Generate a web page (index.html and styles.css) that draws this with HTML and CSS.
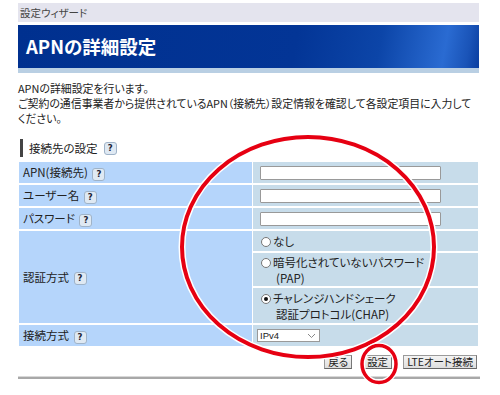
FILE: index.html
```html
<!DOCTYPE html>
<html lang="ja">
<head>
<meta charset="utf-8">
<title>APNの詳細設定</title>
<link rel="stylesheet" href="styles.css">
</head>
<body>
<div class="page">
  <div class="wizard-bar">設定ウィザード</div>
  <h1 class="title">APNの詳細設定</h1>
  <p class="desc">APNの詳細設定を行います。<br>ご契約の通信事業者から提供されているAPN（接続先）設定情報を確認して各設定項目に入力して<br>ください。</p>
  <h2 class="section">接続先の設定 <span class="help">?</span></h2>
  <table class="form">
    <tr>
      <th>APN(接続先) <span class="help">?</span></th>
      <td><span class="input"></span></td>
    </tr>
    <tr>
      <th>ユーザー名 <span class="help">?</span></th>
      <td><span class="input"></span></td>
    </tr>
    <tr>
      <th>パスワード <span class="help">?</span></th>
      <td><span class="input"></span></td>
    </tr>
    <tr>
      <th>認証方式 <span class="help">?</span></th>
      <td class="auth">
        <div class="opt opt-none"><span class="radio"></span>なし</div>
        <div class="opt opt-pap"><span class="radio"></span>暗号化されていないパスワード<br><span class="sub">(PAP)</span></div>
        <div class="opt opt-chap"><span class="radio checked"></span>チャレンジハンドシェーク<br><span class="sub">認証プロトコル(CHAP)</span></div>
      </td>
    </tr>
    <tr>
      <th>接続方式 <span class="help">?</span></th>
      <td><span class="select">IPv4<svg class="chev" width="9" height="6" viewBox="0 0 9 6"><path d="M1 1 L4.5 4.5 L8 1" fill="none" stroke="#888" stroke-width="1"/></svg></span></td>
    </tr>
  </table>
  <div class="buttons">
    <span class="btn">戻る</span>
    <span class="btn">設定</span>
    <span class="btn">LTEオート接続</span>
  </div>
  <div class="rule"></div>
</div>
<svg class="marks" width="500" height="395" viewBox="0 0 500 395">
  <ellipse cx="308" cy="247" rx="126" ry="110" fill="none" stroke="#fff" stroke-width="7"/>
  <ellipse cx="308" cy="247" rx="126" ry="110" fill="none" stroke="#e60012" stroke-width="4"/>
  <ellipse cx="379" cy="364" rx="17" ry="18.5" fill="none" stroke="#fff" stroke-width="6"/>
  <ellipse cx="379" cy="364" rx="17" ry="18.5" fill="none" stroke="#e60012" stroke-width="3.5"/>
</svg>
</body>
</html>
```

FILE: styles.css
```css
html, body {
  margin: 0;
  padding: 0;
  background: #fff;
}
body {
  font-family: "Noto Sans CJK JP", "Noto Sans", sans-serif;
  font-size: 11.5px;
  color: #222;
  font-feature-settings: "palt";
  position: relative;
  width: 500px;
  height: 395px;
  overflow: hidden;
}
.page {
  width: 461px;
  margin-left: 18px;
  padding-top: 3px;
}
.wizard-bar {
  height: 19px;
  line-height: 19px;
  background: #e4e4ee;
  font-size: 10.5px;
  color: #444;
  padding-left: 2px;
}
.title {
  margin: 3px 0 0;
  height: 43px;
  line-height: 42px;
  padding-left: 8px;
  font-size: 18.5px;
  font-weight: bold;
  color: #fff;
  background: linear-gradient(100deg, #00308f 0%, #033596 60%, #0c45a8 78%, #2a6bd2 92%, #1a54b8 97%, #0a3ea0 100%);
  border-bottom: 5px solid #b9cfe3;
}
.desc {
  margin: 8px 0 0;
  line-height: 15px;
  font-size: 10.9px;
  white-space: nowrap;
}
.section {
  margin: 13px 0 0 2px;
  height: 18px;
  line-height: 18px;
  font-size: 11.5px;
  font-weight: normal;
  border-left: 3px solid #444;
  padding-left: 6px;
  display: flex;
  align-items: center;
  gap: 4px;
}
.help {
  display: inline-block;
  width: 11px;
  height: 11px;
  line-height: 11px;
  text-align: center;
  font-family: "DejaVu Sans", sans-serif;
  font-size: 8.5px;
  font-weight: bold;
  color: #223;
  background: #dfe9f3;
  border: 1px solid #9fb3c8;
  border-radius: 3px;
  vertical-align: middle;
  margin-left: 2px;
}
.form {
  margin: 5px 0 0 1px;
  width: 459px;
  border-collapse: collapse;
}
.form th, .form td {
  border-bottom: 2px solid #fff;
  padding: 0;
  height: 21px;
}
.form tr:last-child th, .form tr:last-child td {
  border-bottom: none;
}
.form th {
  width: 229px;
  background: #b5d5fb;
  text-align: left;
  font-weight: normal;
  padding-left: 4px;
  border-right: 1px solid #fff;
}
.form td {
  background: #c7dcea;
  padding-left: 7px;
}
.input {
  display: block;
  width: 179px;
  height: 12px;
  background: #fff;
  border: 1px solid #999;
  border-radius: 1px;
}
.form td.auth {
  padding-left: 0;
}
.opt {
  display: block;
  padding-left: 8px;
  line-height: 16px;
  border-bottom: 2px solid #fff;
}
.opt:last-child {
  border-bottom: none;
}
.opt-none {
  height: 20px;
  line-height: 20px;
}
.opt-pap {
  height: 32px;
  padding-top: 1px;
}
.opt-chap {
  height: 33px;
  padding-top: 2px;
}
.sub {
  padding-left: 15px;
}
.radio {
  display: inline-block;
  width: 8px;
  height: 8px;
  border: 1px solid #777;
  border-radius: 50%;
  background: #fff;
  margin-right: 2px;
  vertical-align: -1px;
  position: relative;
}
.radio.checked::after {
  content: "";
  position: absolute;
  left: 2px;
  top: 2px;
  width: 4px;
  height: 4px;
  border-radius: 50%;
  background: #111;
}
.select {
  display: flex;
  align-items: center;
  justify-content: space-between;
  width: 56px;
  height: 11px;
  padding: 0 3px 0 2px;
  margin-left: -3px;
  background: #fff;
  border: 1px solid #999;
  font-family: "Liberation Sans", sans-serif;
  font-size: 9.5px;
  line-height: 11px;
}
.buttons {
  display: flex;
  justify-content: flex-end;
  gap: 11px;
  margin-top: 9px;
  padding-right: 2px;
}
.btn {
  display: inline-block;
  height: 12px;
  line-height: 12px;
  padding: 0 3px;
  font-size: 10.5px;
  background: linear-gradient(#f4f4f4, #dedede);
  border: 1px solid #9a9a9a;
  border-bottom-color: #666;
  border-right-color: #777;
  color: #222;
}
.rule {
  margin-top: 7px;
  height: 2px;
  width: 462px;
  background: #a8a8a8;
  border-top: 1px solid #d8d8d8;
}
.marks {
  position: absolute;
  left: 0;
  top: 0;
  pointer-events: none;
}
```
